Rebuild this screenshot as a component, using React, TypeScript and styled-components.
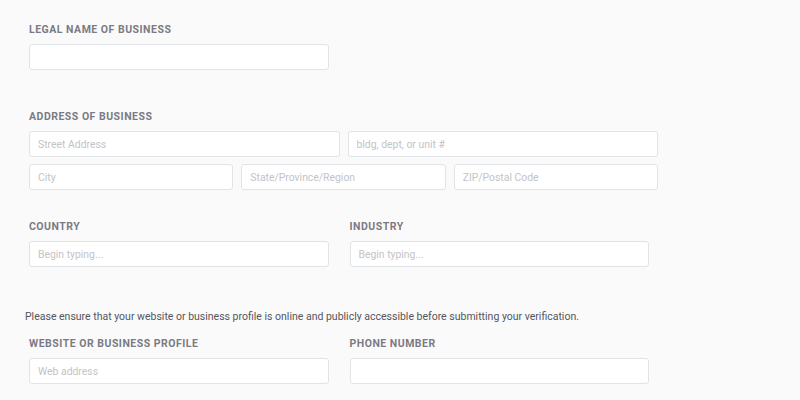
import React from "react";
import styled, { createGlobalStyle } from "styled-components";

const Global = createGlobalStyle`
  html, body { margin: 0; padding: 0; background: #fafafb; }
  body { font-family: Roboto, "Noto Sans", Arial, sans-serif; }
  * { box-sizing: border-box; }
`;

const Page = styled.div`
  width: 800px;
  height: 400px;
  overflow: hidden;
  padding: 23px 29px 0 29px;
  background: #fafafb;
`;

const Section = styled.section<{ $mt?: number }>`
  margin-top: ${(p) => p.$mt ?? 0}px;
`;

const Label = styled.div`
  font-size: 10.5px;
  line-height: 13px;
  font-weight: 700;
  letter-spacing: 0.5px;
  text-transform: uppercase;
  color: #7a7a83;
  margin-bottom: 8px;
`;

const Input = styled.input<{ $w?: number }>`
  display: block;
  width: ${(p) => (p.$w ? `${p.$w}px` : "100%")};
  height: 26px;
  padding: 0 8px;
  border: 1px solid #e0e4e9;
  border-radius: 3px;
  background: #ffffff;
  font-family: Roboto, "Noto Sans", Arial, sans-serif;
  font-size: 10.4px;
  color: #333;
  outline: none;
  &::placeholder { color: #c3c3c8; }
`;

const Grid = styled.div<{ $cols: number; $gap: number; $w: number }>`
  display: grid;
  grid-template-columns: repeat(${(p) => p.$cols}, 1fr);
  column-gap: ${(p) => p.$gap}px;
  row-gap: 7px;
  width: ${(p) => p.$w}px;
`;

const Note = styled.p`
  margin: 43px 0 0 -4px;
  font-size: 10.5px;
  line-height: 13px;
  color: #55555c;
`;

export default function App() {
  return (
    <>
      <Global />
      <Page>
        <Section>
          <Label>Legal name of business</Label>
          <Input $w={300} />
        </Section>

        <Section $mt={40}>
          <Label>Address of business</Label>
          <Grid $cols={2} $gap={8} $w={629}>
            <Input placeholder="Street Address" />
            <Input placeholder="bldg, dept, or unit #" />
          </Grid>
          <Grid $cols={3} $gap={8} $w={629} style={{ marginTop: 7 }}>
            <Input placeholder="City" />
            <Input placeholder="State/Province/Region" />
            <Input placeholder="ZIP/Postal Code" />
          </Grid>
        </Section>

        <Section $mt={30}>
          <Grid $cols={2} $gap={21} $w={620}>
            <div>
              <Label>Country</Label>
              <Input placeholder="Begin typing..." />
            </div>
            <div>
              <Label>Industry</Label>
              <Input placeholder="Begin typing..." />
            </div>
          </Grid>
        </Section>

        <Note>
          Please ensure that your website or business profile is online and publicly accessible before submitting your verification.
        </Note>

        <Section $mt={14}>
          <Grid $cols={2} $gap={21} $w={620}>
            <div>
              <Label>Website or business profile</Label>
              <Input placeholder="Web address" />
            </div>
            <div>
              <Label>Phone number</Label>
              <Input />
            </div>
          </Grid>
        </Section>
      </Page>
    </>
  );
}
